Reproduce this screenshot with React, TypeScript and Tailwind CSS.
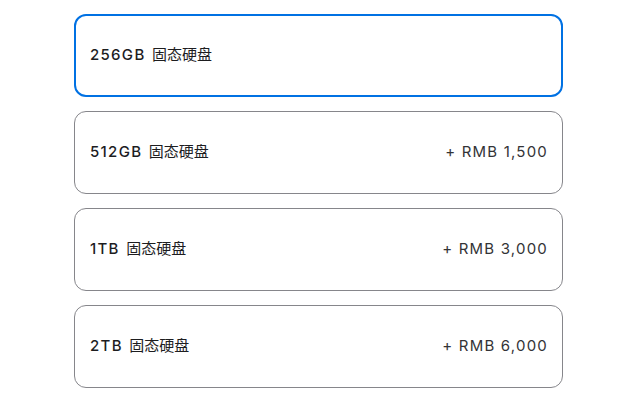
const options = [
  { size: "256GB", price: "" },
  { size: "512GB", price: "+ RMB 1,500" },
  { size: "1TB", price: "+ RMB 3,000" },
  { size: "2TB", price: "+ RMB 6,000" },
];

export default function App() {
  return (
    <div
      className="w-[623px] h-[400px] bg-white pt-[14px]"
      style={{ fontFamily: 'Inter, "Noto Sans CJK SC", sans-serif' }}
    >
      <div className="ml-[74px] w-[489px] flex flex-col gap-[14px]">
        {options.map((opt, i) => (
          <div
            key={opt.size}
            className={
              i === 0
                ? "h-[83px] rounded-[12px] border-2 border-[#0071e3] px-[14px] flex items-center justify-between"
                : "h-[83px] rounded-[12px] border border-[#86868b] pl-[15px] pr-[15px] flex items-center justify-between"
            }
          >
            <span className="text-[15px] text-[#1d1d1f] tracking-[1.3px]">
              <span className="font-medium">{opt.size}</span>{" "}
              <span className="font-normal tracking-[0px] ml-[1px]">固态硬盘</span>
            </span>
            {opt.price && (
              <span className="text-[15px] text-[#333336] tracking-[1.2px] mr-[-1px]">
                {opt.price}
              </span>
            )}
          </div>
        ))}
      </div>
    </div>
  );
}
